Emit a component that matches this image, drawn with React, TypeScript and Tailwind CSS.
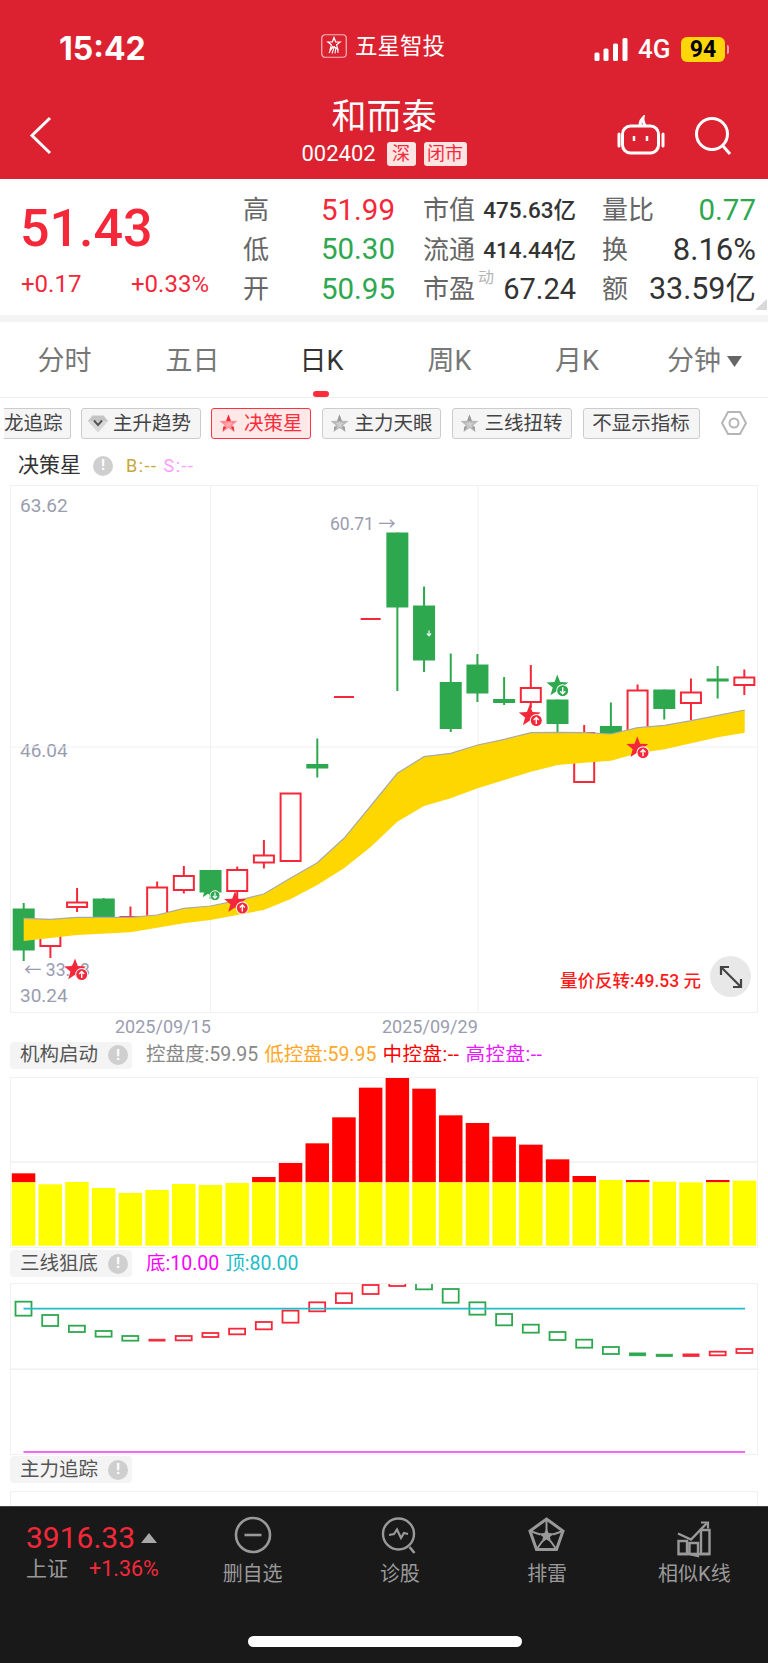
import React from "react";

const RED = "#f5283a";
const GREEN = "#2ea84f";

type C = [string, number, number, number, number];
// colour, body top, body bottom, wick top, wick bottom (page coordinates)
const candles: C[] = [
  ["g", 908.5, 950.5, 903, 961],
  ["r", 922, 946, 922, 958],
  ["r", 902.5, 907, 888, 912],
  ["g", 898.5, 925, 898, 925],
  ["r", 917, 925, 906.5, 925],
  ["r", 887.5, 920, 881.5, 920],
  ["r", 876, 890, 866, 893.5],
  ["g", 870, 892.5, 870, 899],
  ["r", 870, 891, 866.5, 900],
  ["r", 855.5, 862.5, 840, 868.5],
  ["r", 793.5, 861, 793.5, 861],
  ["g", 764, 768.5, 738.5, 777.5],
  ["r", 696, 698, 696, 698],
  ["r", 618, 620, 618, 620],
  ["g", 532.5, 607.5, 532.5, 691],
  ["g", 605.5, 660.5, 586.5, 672],
  ["g", 682, 729, 653.5, 732],
  ["g", 664.5, 693.5, 654, 702],
  ["g", 699, 703, 677, 705],
  ["r", 688, 702, 665, 708],
  ["g", 699.5, 724, 699.5, 733],
  ["r", 733, 782, 725, 782],
  ["g", 726, 745, 702.5, 745],
  ["r", 690.5, 750, 684.5, 750],
  ["g", 689.5, 709, 689.5, 719.5],
  ["r", 692.5, 703, 678.5, 720],
  ["g", 678.5, 681.5, 666, 698.5],
  ["r", 677.5, 685, 669.5, 695],
];

const bandTop: [number, number][] = [
  [23.7, 918.3], [50.4, 919.3], [77, 917.3], [130.4, 917.3], [157, 915], [183.7, 908.3], [210.4, 906], [237, 900.7],
  [263.7, 894], [290.7, 878], [317.3, 862.7], [344, 838.3], [370.7, 806], [397.3, 773.3], [424, 756.7], [450.7, 753.3],
  [477.7, 745], [504.3, 739.3], [531, 732.7], [557.7, 732.3], [584.3, 732.7], [611, 734], [637.7, 727.7], [664.7, 725.3],
  [691.3, 720.7], [718, 715.3], [744.7, 710],
];
const bandBottom: [number, number][] = [
  [744.7, 732.7], [718, 737.3], [691.3, 743.3], [664.7, 749.3], [637.7, 753.3], [611, 760.7], [584.3, 762.7], [557.7, 765],
  [531, 771.7], [504.3, 780], [477.7, 788.3], [450.7, 798.3], [424, 806], [397.3, 821.7], [370.7, 847], [344, 868.3],
  [317.3, 885], [290.7, 899], [263.7, 910], [210.4, 920], [183.7, 923.3], [130.4, 932.3], [77, 935], [23.7, 941],
];

const pts = (a: [number, number][]) => a.map((p) => p.join(",")).join(" ");

function starPoints(cx: number, cy: number, R: number) {
  const out: string[] = [];
  for (let i = 0; i < 10; i++) {
    const rad = i % 2 === 0 ? R : R * 0.42;
    const ang = -Math.PI / 2 + (i * Math.PI) / 5;
    out.push(`${(cx + rad * Math.cos(ang)).toFixed(1)},${(cy + rad * Math.sin(ang)).toFixed(1)}`);
  }
  return out.join(" ");
}

function ChartStar({ x, y, bx, by, color, up }: { x: number; y: number; bx: number; by: number; color: string; up: boolean }) {
  return (
    <g>
      <polygon points={starPoints(x, y, 11.5)} fill={color} />
      <circle cx={bx} cy={by} r={6.5} fill="#ffffff" />
      <circle cx={bx} cy={by} r={5.5} fill={color} />
      {up ? (
        <path d={`M${bx} ${by + 3.5}V${by - 2.5}M${bx - 2.5} ${by - 0.5}L${bx} ${by - 3}L${bx + 2.5} ${by - 0.5}`} stroke="#fff" strokeWidth={1.4} fill="none" />
      ) : (
        <path d={`M${bx} ${by - 3.5}V${by + 2.5}M${bx - 2.5} ${by + 0.5}L${bx} ${by + 3}L${bx + 2.5} ${by + 0.5}`} stroke="#fff" strokeWidth={1.4} fill="none" />
      )}
    </g>
  );
}

function MainChart() {
  return (
    <svg className="relative block" width={746} height={526} viewBox="11 486 746 526">
      <line x1={10} x2={758} y1={747} y2={747} stroke="#eff0f4" />
      <line x1={210.5} x2={210.5} y1={485} y2={1013} stroke="#eff0f4" />
      <line x1={478} x2={478} y1={485} y2={1013} stroke="#eff0f4" />
      {candles.map((c, i) => {
        const x = 23.7 + i * 26.69;
        const col = c[0] === "r" ? RED : GREEN;
        const h = c[2] - c[1];
        return (
          <g key={i}>
            <line x1={x} x2={x} y1={c[3]} y2={c[4]} stroke={col} strokeWidth={2} />
            {c[0] === "r" ? (
              h <= 2 ? (
                <rect x={x - 10} y={c[1]} width={20} height={2} fill={col} />
              ) : (
                <rect x={x - 10} y={c[1]} width={20} height={h} fill="#fff" stroke={col} strokeWidth={2} />
              )
            ) : (
              <rect x={x - 11} y={c[1]} width={22} height={h} fill={col} />
            )}
          </g>
        );
      })}
      <polygon points={pts([...bandTop, ...bandBottom])} fill="#ffd700" />
      <polyline points={pts(bandTop)} fill="none" stroke="#a9a9a9" strokeWidth={1.2} />
      <polygon points={starPoints(208, 890, 9)} fill={GREEN} />
      <path d="M429 630.5v5M427 633.5l2 2.2l2-2.2" stroke="#e8f5ec" strokeWidth={1.3} fill="none" />
      <circle cx={215} cy={895.7} r={5} fill={GREEN} stroke="#fff" />
      <path d="M215 892.5v5.5M212.8 896l2.2 2.2l2.2-2.2" stroke="#fff" strokeWidth={1.2} fill="none" />
      <ChartStar x={75} y={970} bx={81.7} by={974.5} color={RED} up />
      <ChartStar x={235} y={902.7} bx={242.3} by={908} color={RED} up />
      <ChartStar x={529.7} y={716} bx={536.3} by={720.5} color={RED} up />
      <ChartStar x={637.3} y={747.7} bx={643} by={752.7} color={RED} up />
      <ChartStar x={557.3} y={686} bx={562.7} by={690.7} color={GREEN} up={false} />
    </svg>
  );
}

const yellowTops = [367, 373, 366, 384, 399, 390, 372, 375, 369, 367, 367, 367, 367, 367, 367, 367, 367, 367, 367, 367, 367, 367, 360, 367, 365, 367, 367, 362];
const redTops = [340, 0, 0, 0, 0, 0, 0, 0, 0, 351, 309, 250, 172, 83, 50, 86, 166, 189, 230, 254, 298, 348, 0, 360, 0, 0, 360, 0];

function BarChart() {
  return (
    <svg className="block" width={746} height={169} viewBox="11 1078 746 169">
      <line x1={10} x2={758} y1={1162} y2={1162} stroke="#f0f0f0" strokeWidth={1.5} />
      {yellowTops.map((t, i) => {
        const x = 11.8 + i * 26.7;
        const yy = 1060 + t / 3;
        const ry = 1060 + redTops[i] / 3;
        return (
          <g key={i}>
            {redTops[i] > 0 && <rect x={x} y={ry} width={23.5} height={yy - ry} fill="#ff0000" />}
            <rect x={x} y={yy} width={23.5} height={1245.7 - yy} fill="#ffff00" />
          </g>
        );
      })}
    </svg>
  );
}

const small: [string, number, number][] = [
  ["g", 155, 197], ["g", 195, 228], ["g", 227, 246], ["g", 243, 260], ["g", 258, 272], ["r", 268, 273], ["r", 258, 271],
  ["r", 249, 261], ["r", 236, 253], ["r", 216, 238], ["r", 182, 218], ["r", 157, 184], ["r", 130, 159], ["r", 105, 132],
  ["r", 96, 108], ["g", 96, 118], ["g", 117, 158], ["g", 157, 194], ["g", 192, 226], ["g", 224, 248], ["g", 246, 270],
  ["g", 269, 293], ["g", 291, 312], ["g", 309, 317], ["g", 313, 319], ["r", 312, 319], ["r", 305, 316], ["r", 297, 309],
];

function LineChart() {
  return (
    <svg className="block" width={746} height={170} viewBox="11 1284 746 170">
      <line x1={10} x2={758} y1={1369.3} y2={1369.3} stroke="#f0f0f0" strokeWidth={1.5} />
      {small.map((c, i) => {
        const x = 23.5 + i * 26.7;
        const col = c[0] === "r" ? RED : GREEN;
        const top = 1250 + c[1] / 3;
        const h = (c[2] - c[1]) / 3;
        return <rect key={i} x={x - 8} y={top} width={16} height={h} fill={h < 3.5 ? col : "#fff"} stroke={col} strokeWidth={h < 3.5 ? 1 : 1.8} />;
      })}
      <line x1={23.5} x2={745} y1={1308.7} y2={1308.7} stroke="#22bcc8" strokeWidth={1.8} />
      <line x1={23.5} x2={745} y1={1452} y2={1452} stroke="#f033f0" strokeWidth={1.3} />
    </svg>
  );
}

function Info({ size = 20 }: { size?: number }) {
  return (
    <span className="inline-flex items-center justify-center rounded-full bg-[#cfcfcf] text-white font-bold text-[15px] leading-none" style={{ width: size, height: size }}>
      !
    </span>
  );
}

function Label({ text, w = 122 }: { text: string; w?: number }) {
  return (
    <div className="flex h-[27px] items-center rounded-[4px] bg-[#f4f4f4] pl-[10px] pr-[4px] justify-between" style={{ width: w }}>
      <span className="text-[19.5px] leading-none text-[#555]">{text}</span>
      <Info />
    </div>
  );
}

function PillStar({ color, dark, light }: { color: string; dark: string; light: string }) {
  return (
    <svg width={19} height={19} viewBox="0 0 20 20" className="shrink-0">
      <polygon points={starPoints(10, 10.5, 10)} fill={color} />
      <polygon points={starPoints(10, 11, 4.8)} fill={light} />
      <polygon points="10,0.5 7.6,7.2 10,8 12.4,7.2" fill={dark} />
      <polygon points="3.8,19 4.6,13 7.5,13.8" fill={dark} />
      <polygon points="16.2,19 15.4,13 12.5,13.8" fill={dark} />
    </svg>
  );
}

const grayStar = <PillStar color="#b9b9b9" dark="#9b9b9b" light="#cfcfcf" />;
const pillBase = "flex h-[31px] shrink-0 items-center rounded-[3px] border text-[19.5px] leading-none";

function Stat({ label, value, cls }: { label: React.ReactNode; value: string; cls: string }) {
  return (
    <div className="flex h-[39.6px] items-center justify-between">
      <span className="text-[26px] leading-none text-[#666]">{label}</span>
      <span className={cls}>{value}</span>
    </div>
  );
}

const numBig = "text-[29.5px] leading-none";
const numSm = "text-[22.5px] leading-none font-medium text-[#333]";

function Tab({ t, w, active }: { t: string; w: number; active?: boolean }) {
  return (
    <div className={`flex items-center justify-center text-[27px] leading-none ${active ? "text-[#333]" : "text-[#777]"}`} style={{ width: w }}>
      {t}
    </div>
  );
}

function NavItem({ label, children }: { label: string; children: React.ReactNode }) {
  return (
    <div className="flex w-[147.5px] flex-col items-center pt-[4px]">
      <svg width={48} height={48} viewBox="0 0 48 48" fill="none" stroke="#999" className="block">
        {children}
      </svg>
      <span className="mt-[1px] text-[20px] leading-[28px] text-[#999]">{label}</span>
    </div>
  );
}

export default function App() {
  return (
    <div className="relative flex h-[1663px] w-[768px] flex-col overflow-hidden bg-white font-['Roboto','Noto_Sans_CJK_SC',sans-serif]">
      {/* header */}
      <header className="h-[179px] shrink-0 bg-[#dc2230] text-white">
        <div className="flex h-[98px] items-center">
          <div className="ml-[59px] w-[262px] text-[32px] font-bold leading-none font-['Inter','Noto_Sans_CJK_SC',sans-serif]">15:42</div>
          <div className="mb-[6px] flex w-[273px] items-center">
            <svg width={26} height={24} viewBox="0 0 26 24" className="block shrink-0">
              <rect x={0.75} y={0.75} width={24.5} height={22.5} rx={3.5} fill="#dc2230" stroke="#f5b9bd" strokeWidth={1.2} />
              <polygon points={starPoints(13, 10, 6.5)} fill="none" stroke="#fff" strokeWidth={1.2} />
              <path d="M8 19l4-7M11 19.5l2.5-7M14 19.5l1-6M17 19l-.5-5" stroke="#fff" strokeWidth={1.1} />
            </svg>
            <span className="ml-[8px] text-[22.5px] leading-none">五星智投</span>
          </div>
          <svg width={34} height={23} viewBox="0 0 34 23" fill="#fff" className="block shrink-0">
            <rect x={0.5} y={14.5} width={5} height={8.5} rx={1.5} />
            <rect x={9.5} y={10.5} width={5} height={12.5} rx={1.5} />
            <rect x={19} y={5.5} width={5} height={17.5} rx={1.5} />
            <rect x={28.5} y={0} width={5} height={23} rx={1.5} />
          </svg>
          <span className="ml-[10px] w-[33px] text-[26px] font-medium leading-none">4G</span>
          <span className="ml-[10px] flex h-[25px] w-[44px] items-center justify-center rounded-[6px] bg-[#ffd60a] text-[23px] font-bold leading-none text-black">94</span>
          <span className="ml-[2px] h-[9px] w-[2px] rounded-r-sm bg-[#f2a0a6]" />
        </div>
        <div className="flex h-[81px]">
          <svg width={24} height={81} viewBox="0 0 24 81" fill="none" stroke="#fff" strokeWidth={3} className="ml-[29px] block shrink-0">
            <polyline points="21,20 3,37.5 21,55" />
          </svg>
          <div className="ml-[111px] flex w-[440px] flex-col items-center">
            <div className="h-[40px] text-[35px] leading-[40px]">和而泰</div>
            <div className="mt-[4px] flex items-center">
              <span className="w-[74px] text-[22px] leading-[24px]">002402</span>
              <span className="ml-[11px] flex h-[24px] w-[29px] items-center justify-center rounded-[3px] bg-[#fde5e3] text-[18px] leading-none text-[#f5283a]">深</span>
              <span className="ml-[8px] flex h-[24px] w-[43px] items-center justify-center rounded-[3px] bg-[#fde5e3] text-[18px] leading-none text-[#f5283a]">闭市</span>
            </div>
          </div>
          <svg width={48} height={42} viewBox="0 0 48 42" fill="none" stroke="#fff" strokeWidth={3} className="ml-[13px] mt-[17px] block shrink-0">
            <rect x={5.5} y={11} width={36} height={27} rx={8} />
            <path d="M24 11c-2-3 0-6 2-8c-.5 3 1 5 2 8" />
            <path d="M2 19v12M46 19v12" strokeLinecap="round" />
            <path d="M17 21v5M30 21v5" strokeWidth={2.5} />
          </svg>
          <svg width={38} height={42} viewBox="0 0 38 42" fill="none" stroke="#fff" strokeWidth={3} className="ml-[29px] mt-[18px] block shrink-0">
            <circle cx={18} cy={18} r={15.5} />
            <path d="M29 30l7 8" />
          </svg>
        </div>
      </header>

      {/* stats */}
      <section className="relative flex h-[136px] shrink-0 pl-[21px] pt-[11.5px]">
        <div className="w-[222px]">
          <div className="mt-[9px] h-[58px] -ml-[1px] text-[52px] leading-[58px] text-[#f5283a] font-medium">51.43</div>
          <div className="mt-[14px] flex w-[188px] justify-between text-[24px] leading-none text-[#f5283a]">
            <span>+0.17</span>
            <span>+0.33%</span>
          </div>
        </div>
        <div className="w-[152px]">
          <Stat label="高" value="51.99" cls={`${numBig} text-[#f5283a]`} />
          <Stat label="低" value="50.30" cls={`${numBig} text-[#2ea84f]`} />
          <Stat label="开" value="50.95" cls={`${numBig} text-[#2ea84f]`} />
        </div>
        <div className="ml-[28px] w-[153px]">
          <Stat label="市值" value="475.63亿" cls={numSm} />
          <Stat label="流通" value="414.44亿" cls={numSm} />
          <Stat label="市盈" value="67.24" cls="text-[29px] leading-none text-[#333]" />
        </div>
        <div className="ml-[26px] w-[154px]">
          <Stat label="量比" value="0.77" cls={`${numBig} text-[#2ea84f]`} />
          <Stat label="换" value="8.16%" cls="text-[31px] leading-none text-[#333]" />
          <Stat label="额" value="33.59亿" cls="text-[30.5px] leading-none text-[#333]" />
        </div>
        <span className="absolute left-[478px] top-[91px] text-[16px] leading-none text-[#b5b5b5]">动</span>
        <svg width={12} height={12} viewBox="0 0 12 12" className="absolute left-[755px] top-[120px]">
          <polygon points="12,0 12,11 0,11" fill="#d9d9d9" />
        </svg>
      </section>
      <div className="h-[7px] shrink-0 bg-[#f4f4f4]" />

      {/* tabs */}
      <nav className="relative flex h-[76px] shrink-0 items-center border-b border-[#eeeeee] pl-[1px] pt-[3px]">
        <Tab t="分时" w={127} />
        <Tab t="五日" w={129} />
        <Tab t="日K" w={129} active />
        <Tab t="周K" w={127} />
        <Tab t="月K" w={128} />
        <div className="ml-[26px] flex items-center gap-[6px]">
          <span className="text-[27px] leading-none text-[#777]">分钟</span>
          <svg width={15} height={11} viewBox="0 0 15 11" className="block">
            <polygon points="0,0 15,0 7.5,11" fill="#666" />
          </svg>
        </div>
        <span className="absolute bottom-0 left-[312.5px] h-[6px] w-[16px] rounded-[3px] bg-[#ff2d3c]" />
      </nav>

      {/* indicator pills */}
      <div className="flex h-[50px] shrink-0 items-start pl-[4px] pt-[10px] text-[#444]">
        <div className={`${pillBase} w-[67px] rounded-l-none border-l-0 border-[#cccccc] bg-[#f5f5f5]`}>龙追踪</div>
        <div className={`${pillBase} ml-[10px] w-[120px] gap-[5px] border-[#cccccc] bg-[#f5f5f5] pl-[6px]`}>
          <svg width={20} height={19} viewBox="0 0 20 19" className="block shrink-0">
            <polygon points="4.5,1.5 15.5,1.5 20,7 10,18 0,7" fill="#c4c4c4" />
            <polygon points="0,7 20,7 10,18" fill="#d8d8d8" />
            <path d="M6 6.5l4 4.5l4-4.5" fill="none" stroke="#555" strokeWidth={2} />
          </svg>
          主升趋势
        </div>
        <div className={`${pillBase} ml-[10px] w-[100px] gap-[6px] border-[#ff3344] bg-[#ffe8e8] pl-[7px] text-[#ff2d3c]`}>
          <PillStar color="#ff8a93" dark="#f5283a" light="#ffa8ae" />
          决策星
        </div>
        <div className={`${pillBase} ml-[10.5px] w-[119px] gap-[6px] border-[#cccccc] bg-[#f5f5f5] pl-[7px]`}>
          {grayStar}
          主力天眼
        </div>
        <div className={`${pillBase} ml-[11px] w-[120px] gap-[6px] border-[#cccccc] bg-[#f5f5f5] pl-[7px]`}>
          {grayStar}
          三线扭转
        </div>
        <div className={`${pillBase} ml-[11px] w-[117px] justify-center border-[#cccccc] bg-[#f5f5f5]`}>不显示指标</div>
        <svg width={26} height={26} viewBox="0 0 26 26" fill="none" stroke="#b5b5b5" className="ml-[21px] mt-[2px] block shrink-0">
          <polygon points="7,2 19,2 25,13 19,24 7,24 1,13" strokeWidth={2} />
          <circle cx={13} cy={13} r={4.5} strokeWidth={2} />
        </svg>
      </div>

      {/* chart title */}
      <div className="flex h-[37px] shrink-0 items-center pb-[2px] pl-[18px]">
        <span className="w-[75px] text-[21px] leading-none text-[#333]">决策星</span>
        <Info size={20} />
        <span className="ml-[13px] text-[18px] leading-none tracking-[1.5px] text-[#c9a73a]">B:--</span>
        <span className="ml-[6px] text-[18px] leading-none tracking-[1.5px] text-[#ff9cff]">S:--</span>
      </div>

      {/* main chart */}
      <div className="relative ml-[10px] h-[528px] w-[748px] shrink-0 border border-[#f1f1f1]">
        <span className="absolute left-[9px] top-[9px] text-[19px] leading-[22px] text-[#9a9cb0]">63.62</span>
        <span className="absolute left-[9px] top-[254px] text-[19px] leading-[22px] text-[#9a9cb0]">46.04</span>
        <span className="absolute left-[9px] top-[499px] text-[19px] leading-[22px] text-[#9a9cb0]">30.24</span>
        <span className="absolute left-[319px] top-[27px] text-[17.5px] leading-[22px] text-[#9a9cb0]">60.71 →</span>
        <span className="absolute left-[13px] top-[473px] text-[17.5px] leading-[22px] text-[#9a9cb0]">← 33.18</span>
        <div className="absolute left-0 top-0">
          <MainChart />
        </div>
        <span className="absolute left-[549px] top-[484px] text-[17.5px] font-medium leading-[22px] text-[#ff1a1a]">量价反转:49.53 元</span>
        <div className="absolute left-[699px] top-[470px] flex h-[41px] w-[41px] items-center justify-center rounded-full bg-[#e8e8e8]">
          <svg width={26} height={26} viewBox="0 0 26 26" fill="none" stroke="#444" strokeWidth={2.2}>
            <path d="M3 3l20 20M3 11V3h8M23 15v8h-8" />
          </svg>
        </div>
      </div>

      {/* dates */}
      <div className="flex h-[28px] shrink-0 items-center text-[18px] leading-none text-[#9a9cb0]">
        <span className="ml-[115px] w-[267px]">2025/09/15</span>
        <span>2025/09/29</span>
      </div>

      <div className="flex h-[28px] shrink-0 items-center pl-[10px] text-[19.5px] leading-none">
        <Label text="机构启动" />
        <span className="ml-[14px] text-[#888]">控盘度:59.95</span>
        <span className="ml-[6px] text-[#ffa726]">低控盘:59.95</span>
        <span className="ml-[6px] tracking-[0.5px] text-[#ff0000]">中控盘:--</span>
        <span className="ml-[6px] tracking-[0.5px] text-[#e81aff]">高控盘:--</span>
      </div>

      <div className="ml-[10px] mt-[8px] h-[171px] w-[748px] shrink-0 border border-[#f1f1f1]">
        <BarChart />
      </div>

      <div className="mt-[2px] flex h-[27px] shrink-0 items-center pl-[10px] text-[19.5px] leading-none">
        <Label text="三线狙底" />
        <span className="ml-[14px] text-[#ff00ff]">底:10.00</span>
        <span className="ml-[6px] text-[#22bcc8]">顶:80.00</span>
      </div>

      <div className="ml-[10px] mt-[6px] h-[172px] w-[748px] shrink-0 overflow-hidden border border-[#f1f1f1]">
        <LineChart />
      </div>

      <div className="mt-[1px] flex h-[27px] shrink-0 items-center pl-[10px]">
        <Label text="主力追踪" />
      </div>

      <div className="ml-[10px] mt-[8px] h-[40px] w-[748px] shrink-0 border border-[#f1f1f1]" />

      {/* footer */}
      <footer className="absolute bottom-0 left-0 flex h-[157px] w-[768px] border-t border-[#444444] bg-[#191919]">
        <div className="w-[179px] shrink-0 pl-[26px] pt-[14px]">
          <div className="flex h-[33px] items-center">
            <span className="text-[30px] leading-none text-[#f5283a]">3916.33</span>
            <svg width={16} height={10} viewBox="0 0 16 10" className="ml-[6px] block">
              <polygon points="8,0 16,10 0,10" fill="#a8a8a8" />
            </svg>
          </div>
          <div className="flex h-[30px] items-center">
            <span className="text-[21px] leading-none text-[#999]">上证</span>
            <span className="ml-[21px] text-[21.5px] leading-none text-[#f5283a]">+1.36%</span>
          </div>
        </div>
        <NavItem label="删自选">
          <circle cx={24} cy={24} r={17} strokeWidth={2.6} />
          <line x1={15.5} x2={32.5} y1={24} y2={24} strokeWidth={2.6} />
        </NavItem>
        <NavItem label="诊股">
          <circle cx={22.5} cy={23} r={15.5} strokeWidth={2.4} />
          <path d="M33.5 36l5 6" strokeWidth={2.6} />
          <polyline points="13,24 18,23 21,18.5 25,27 28,22 32,23" strokeWidth={2.2} />
        </NavItem>
        <NavItem label="排雷">
          <polygon points="23.5,8 40,20 33.5,38.5 13.5,38.5 7,20" strokeWidth={3} />
          <polygon points={starPoints(23.5, 25, 8.5)} fill="#999" stroke="none" />
          <path d="M23.5 8v11M40 20l-10 3.5M33.5 38.5l-6-8.5M13.5 38.5l6-8.5M7 20l10 3.5" strokeWidth={2} />
        </NavItem>
        <NavItem label="相似K线">
          <path d="M8.5 43V30h8.5v13zM19.5 43V32h8.5v13zM31 43V19h8.5v24z" strokeWidth={2.4} />
          <path d="M8 43h32" strokeWidth={2.6} />
          <polyline points="8,22.5 21,28.5 37,12" strokeWidth={2.4} />
          <path d="M31 11.5h7v6" strokeWidth={2.2} />
        </NavItem>
        <span className="absolute left-[247.5px] top-[129px] h-[11px] w-[274px] rounded-full bg-white" />
      </footer>
    </div>
  );
}
